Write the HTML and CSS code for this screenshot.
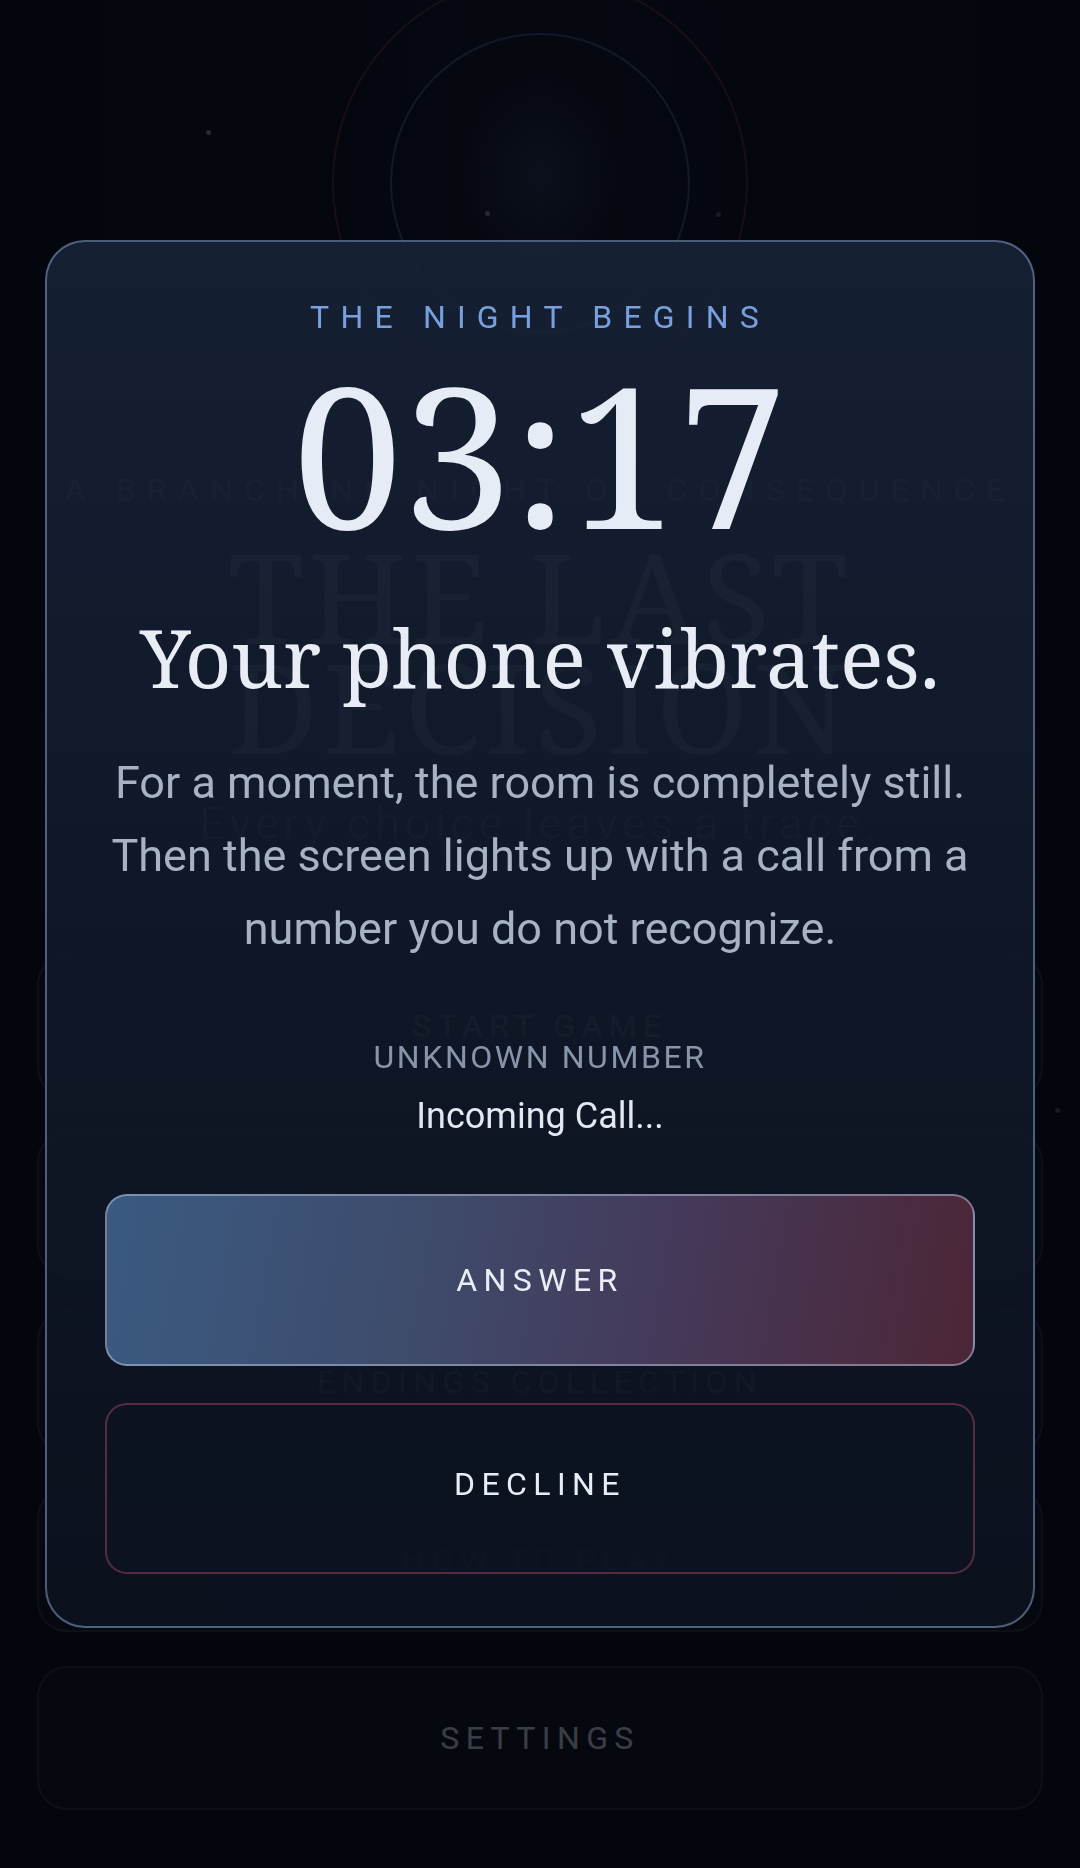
FILE: index.html
```html
<!DOCTYPE html>
<html>
<head>
    <title>The Last Decision</title>
    <link rel="stylesheet" href="styles.css">
</head>
<body>
    <div class="title-screen">
        <div class="emblem">
            <span class="ring ring-outer"></span>
            <span class="ring ring-inner"></span>
            <span class="glow"></span>
        </div>
        <span class="spark spark-a"></span>
        <span class="spark spark-b"></span>
        <span class="spark spark-c"></span>
        <span class="spark spark-d"></span>

        <p class="tagline">A BRANCHING NIGHT OF CONSEQUENCE</p>
        <h1 class="game-title">THE LAST<br>DECISION</h1>
        <p class="subtitle">Every choice leaves a trace.</p>

        <nav class="menu">
            <button class="menu-btn">START GAME</button>
            <button class="menu-btn">CONTINUE</button>
            <button class="menu-btn">ENDINGS COLLECTION</button>
            <button class="menu-btn">HOW TO PLAY</button>
            <button class="menu-btn">SETTINGS</button>
        </nav>
    </div>

    <div class="overlay">
        <section class="call-card">
            <p class="kicker">THE NIGHT BEGINS</p>
            <div class="clock">03:17</div>
            <h2 class="scene-title">Your phone vibrates.</h2>
            <p class="scene-text">For a moment, the room is completely still. Then the screen lights up with a call from a number you do not recognize.</p>

            <div class="caller">
                <p class="caller-name">UNKNOWN NUMBER</p>
                <p class="caller-status">Incoming Call...</p>
            </div>

            <button class="btn btn-answer">ANSWER</button>
            <button class="btn btn-decline">DECLINE</button>
        </section>
    </div>
</body>
</html>
```

FILE: styles.css
```css
* {
    box-sizing: border-box;
}
body {
    margin: 0;
    min-height: 1868px;
    background: radial-gradient(ellipse at 50% 10%, #121a2e 0%, #0e1526 60%, #0d1322 100%);
    font-family: Roboto, "Noto Sans", Arial, sans-serif;
    overflow: hidden;
}
p, h1, h2 {
    margin: 0;
}

/* title screen behind the modal */
.title-screen {
    display: flow-root;
    position: relative;
    padding: 0 37px;
    text-align: center;
}
.emblem {
    position: relative;
    width: 416px;
    height: 416px;
    margin: -25px auto 0;
}
.ring {
    position: absolute;
    border-radius: 50%;
}
.ring-outer {
    inset: 0;
    border: 2px solid #55323a;
}
.ring-inner {
    inset: 58px;
    border: 2px solid #3c5782;
}
.glow {
    position: absolute;
    left: 123px;
    top: 95px;
    width: 170px;
    height: 210px;
    background: radial-gradient(ellipse at center, rgba(70, 100, 150, 0.4), rgba(70, 100, 150, 0) 70%);
}
.spark {
    position: absolute;
    width: 5px;
    height: 5px;
    border-radius: 50%;
    background: #8a94a8;
}
.spark-a { left: 206px; top: 130px; }
.spark-b { left: 485px; top: 211px; }
.spark-c { left: 716px; top: 212px; opacity: 0.6; }
.spark-d { left: 1055px; top: 1108px; opacity: 0.6; }

.tagline {
    margin-top: 79px;
    font-size: 32px;
    line-height: 40px;
    letter-spacing: 0.35em;
    color: #8e9ab0;
}
.game-title {
    margin-top: 31px;
    font-family: "Noto Serif", "DejaVu Serif", serif;
    font-weight: 400;
    font-size: 124px;
    line-height: 110px;
    letter-spacing: 0.035em;
    color: #d6deea;
}
.subtitle {
    margin-top: 35px;
    font-size: 44px;
    line-height: 56px;
    font-weight: 300;
    letter-spacing: 0.125em;
    color: #8e9ab0;
}
.menu {
    margin-top: 102px;
    display: flex;
    flex-direction: column;
    gap: 34px;
}
.menu-btn {
    height: 144px;
    border: 2px solid rgba(150, 172, 212, 0.2);
    border-radius: 30px;
    background: rgba(255, 255, 255, 0.03);
    font-family: Roboto, sans-serif;
    font-size: 32px;
    letter-spacing: 0.2em;
    color: #cdd8ec;
}

/* modal */
.overlay {
    position: fixed;
    inset: 0;
    display: flex;
    align-items: center;
    justify-content: center;
    background: rgba(1, 2, 5, 0.72);
}
.call-card {
    width: 990px;
    padding: 55px 58px 52px;
    border: 2px solid rgba(110, 133, 172, 0.66);
    border-radius: 40px;
    background: linear-gradient(180deg, rgba(24, 35, 55, 0.9) 0%, rgba(17, 26, 42, 0.9) 50%, rgba(12, 18, 31, 0.92) 100%);
    text-align: center;
}
.kicker {
    font-size: 32px;
    line-height: 40px;
    letter-spacing: 0.35em;
    color: #79a0de;
}
.clock {
    margin-top: 20px;
    font-family: "Noto Serif", "DejaVu Serif", serif;
    font-size: 196px;
    line-height: 192px;
    color: #e6ecf5;
}
.scene-title {
    margin-top: 62px;
    font-family: "Noto Serif", "DejaVu Serif", serif;
    font-weight: 400;
    font-size: 81px;
    line-height: 91px;
    color: #e8edf5;
}
.scene-text {
    margin-top: 44px;
    font-size: 45px;
    line-height: 73px;
    color: #a7b2c5;
}
.caller {
    margin-top: 72px;
}
.caller-name {
    font-size: 32px;
    line-height: 40px;
    letter-spacing: 0.08em;
    color: #8794aa;
}
.caller-status {
    margin-top: 17px;
    font-size: 36px;
    line-height: 44px;
    color: #e3e9f2;
}
.btn {
    display: block;
    width: 100%;
    border-radius: 22px;
    font-family: Roboto, sans-serif;
    font-size: 32px;
    letter-spacing: 0.2em;
    color: #e8eef6;
    cursor: pointer;
}
.btn-answer {
    margin-top: 56px;
    height: 172px;
    border: 2px solid rgba(190, 200, 228, 0.5);
    background: linear-gradient(100deg, #3a5a82 0%, #3e4c6c 35%, #45395a 65%, #4c2636 100%);
}
.btn-decline {
    margin-top: 37px;
    height: 171px;
    padding-bottom: 10px;
    border: 2px solid rgba(190, 80, 110, 0.42);
    background: rgba(14, 20, 34, 0.6);
}
```
